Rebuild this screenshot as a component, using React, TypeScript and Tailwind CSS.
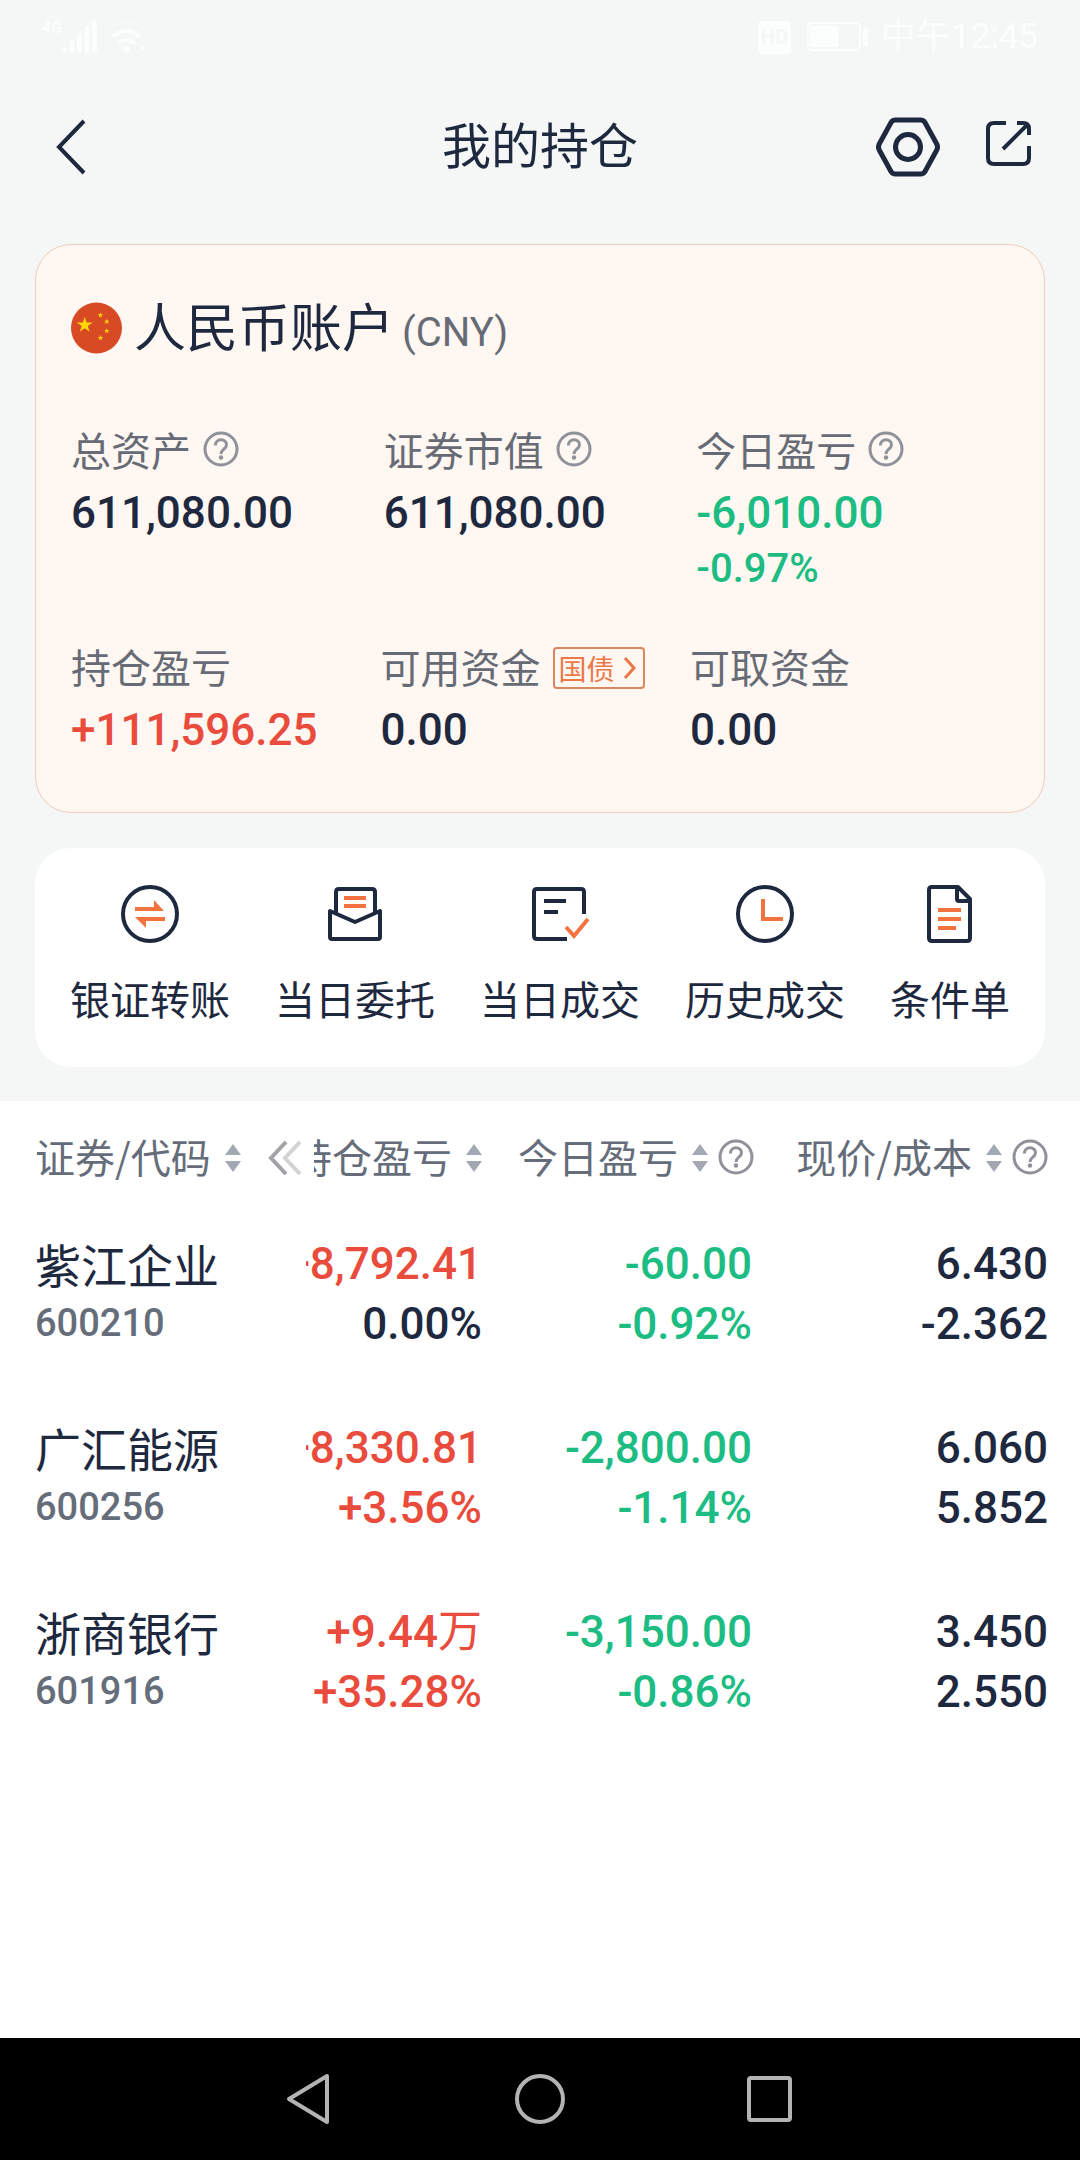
import { type ReactNode } from "react";
import clsx from "clsx";

type Tone = "up" | "down" | "flat";

type Cell = { text: string; unit?: string; tone: Tone };

type Holding = {
  name: string;
  code: string;
  total: [Cell, Cell];
  today: [Cell, Cell];
  price: string;
  cost: string;
};

const toneClass: Record<Tone, string> = {
  up: "text-[#e94b3c]",
  down: "text-[#1cbc83]",
  flat: "text-[#1e293f]",
};

const holdings: Holding[] = [
  {
    name: "紫江企业",
    code: "600210",
    total: [
      { text: "+8,792.41", tone: "up" },
      { text: "0.00%", tone: "flat" },
    ],
    today: [
      { text: "-60.00", tone: "down" },
      { text: "-0.92%", tone: "down" },
    ],
    price: "6.430",
    cost: "-2.362",
  },
  {
    name: "广汇能源",
    code: "600256",
    total: [
      { text: "+8,330.81", tone: "up" },
      { text: "+3.56%", tone: "up" },
    ],
    today: [
      { text: "-2,800.00", tone: "down" },
      { text: "-1.14%", tone: "down" },
    ],
    price: "6.060",
    cost: "5.852",
  },
  {
    name: "浙商银行",
    code: "601916",
    total: [
      { text: "+9.44", unit: "万", tone: "up" },
      { text: "+35.28%", tone: "up" },
    ],
    today: [
      { text: "-3,150.00", tone: "down" },
      { text: "-0.86%", tone: "down" },
    ],
    price: "3.450",
    cost: "2.550",
  },
];

function StatusBar() {
  return (
    <div className="flex h-[74px] items-center justify-between px-[42px] text-[#fcfdfd]">
      <div className="flex items-center gap-2.5">
        <div className="flex items-start">
          <span className="font-['Roboto',sans-serif] text-base leading-4 font-bold">4G</span>
          <svg width="36" height="34" viewBox="0 0 36 34" fill="currentColor" aria-hidden="true">
            <circle cx="2.5" cy="30.5" r="2.5" />
            <rect x="7.5" y="20" width="5" height="13" rx="2.5" />
            <rect x="15" y="13" width="5" height="20" rx="2.5" />
            <rect x="22.5" y="6" width="5" height="27" rx="2.5" />
            <rect x="30" y="0" width="5" height="33" rx="2.5" />
          </svg>
        </div>
        <svg width="40" height="34" viewBox="0 0 40 34" fill="none" stroke="currentColor" strokeLinecap="round" aria-hidden="true">
          <path d="M2 8.500a24 24 0 0 1 33 0" strokeWidth="2" opacity=".5" />
          <path d="M6.500 15.500a18 18 0 0 1 24 0" strokeWidth="4" />
          <path d="M11.500 22.500a11 11 0 0 1 14 0" strokeWidth="4" />
          <circle cx="18.500" cy="29" r="3.500" fill="currentColor" stroke="none" />
          <path d="M32 24l5 4-5 4z" fill="currentColor" stroke="none" />
        </svg>
      </div>
      <div className="flex items-center">
        <span className="flex size-[33px] items-center justify-center rounded bg-[#fcfdfd] font-['Roboto',sans-serif] text-xl font-bold text-[#f4f7f6]">
          HD
        </span>
        <svg className="ml-4" width="62" height="30" viewBox="0 0 62 30" aria-hidden="true">
          <rect x="1" y="1" width="52" height="27" rx="4" fill="none" stroke="currentColor" strokeWidth="2" />
          <rect x="3" y="4" width="28" height="21" fill="currentColor" />
          <rect x="56" y="6" width="5" height="18" rx="2" fill="currentColor" />
        </svg>
        <span className="ml-3 font-['Roboto','Noto_Sans_CJK_SC',sans-serif] text-[35px] leading-10">中午12:45</span>
      </div>
    </div>
  );
}

function Header() {
  return (
    <header className="grid h-[146px] grid-cols-[1fr_auto_1fr] items-center px-12">
      <button type="button" aria-label="返回" className="justify-self-start pl-2">
        <svg className="block" width="32" height="56" viewBox="0 0 32 56" fill="none" stroke="currentColor" strokeWidth="4">
          <path d="M28 2L3 28l25 26" />
        </svg>
      </button>
      <h1 className="pb-2 text-[49px] leading-[64px]">我的持仓</h1>
      <div className="flex items-center gap-[46px] justify-self-end">
        <button type="button" aria-label="设置">
          <svg className="block" width="64" height="60" viewBox="0 0 64 60" fill="none" stroke="currentColor" strokeWidth="5">
            <path d="M19.500 3h25q3 0 4.500 2.500L60.500 26.500q2 3.500 0 7L49 54.500q-1.500 2.500-4.500 2.500h-25q-3 0-4.500-2.500L3.500 33.500q-2-3.500 0-7L15 5.500Q16.500 3 19.500 3z" />
            <circle cx="32" cy="30" r="12.500" />
          </svg>
        </button>
        <button type="button" aria-label="分享" className="pb-2">
          <svg className="block" width="46" height="46" viewBox="0 0 46 46" fill="none" stroke="currentColor" strokeWidth="4">
            <path d="M20 3H8Q2 3 2 9v29q0 6 6 6h29q6 0 6-6V26" />
            <path d="M31 3h6q6 0 6 6v6M42 4L17 29" />
          </svg>
        </button>
      </div>
    </header>
  );
}

function HelpButton({ label }: { label: string }) {
  return (
    <button type="button" aria-label={`${label}说明`} className="shrink-0 text-[#8f929a]">
      <svg className="block" width="36" height="36" viewBox="0 0 36 36" fill="none" stroke="currentColor" strokeWidth="3">
        <circle cx="18" cy="18" r="16" />
        <path d="M12.500 14.500c0-3.500 2.300-5.700 5.500-5.700s5.500 2 5.500 5c0 4.500-5.500 4.300-5.500 9.200" />
        <circle cx="18" cy="26.500" r="2.200" fill="currentColor" stroke="none" />
      </svg>
    </button>
  );
}

function ChinaFlag() {
  const star = "M0-1L.225-.309.951-.309.363.118.588.809 0 .382-.588.809-.363.118-.951-.309-.225-.309z";
  return (
    <svg width="51" height="52" viewBox="0 0 52 52" aria-hidden="true">
      <circle cx="26" cy="26" r="26" fill="#d84a24" />
      <g fill="#ffd80a">
        <path d={star} transform="translate(14 23) scale(8.500)" />
        <path d={star} transform="translate(30 13) scale(3)" />
        <path d={star} transform="translate(36.500 19.500) scale(3)" />
        <path d={star} transform="translate(36.500 29) scale(3)" />
        <path d={star} transform="translate(30 36) scale(3)" />
      </g>
    </svg>
  );
}

type MetricProps = {
  label: string;
  value: string;
  tone?: Tone;
  sub?: string;
  extra?: ReactNode;
};

function Metric({ label, value, tone = "flat", sub, extra }: MetricProps) {
  return (
    <div className="whitespace-nowrap">
      <div className="flex h-[62px] items-center gap-3 text-[#666b76]">
        <span className="text-[40px] leading-[62px]">{label}</span>
        {extra}
      </div>
      <div className={clsx("font-['Roboto',sans-serif] text-[44px] leading-[66px] font-medium", toneClass[tone])}>{value}</div>
      {sub && (
        <div className={clsx("font-['Roboto',sans-serif] text-[40px] leading-[46px] font-medium", toneClass[tone])}>{sub}</div>
      )}
    </div>
  );
}

function AccountCard() {
  return (
    <section className="mx-[35px] mt-6 rounded-[36px] border border-[#f2cdbb] bg-[#fff7f1] px-[35px] pt-12 pb-[49px]">
      <div className="flex h-[68px] items-center">
        <div className="pt-0.5">
          <ChinaFlag />
        </div>
        <h2 className="ml-3 pb-1 text-[52px] leading-[64px]">人民币账户</h2>
        <span className="ml-2 pt-3 font-['Roboto',sans-serif] text-[40px] text-[#666b76]">(CNY)</span>
      </div>
      <div className="mt-[57px] grid grid-cols-3">
        <Metric label="总资产" value="611,080.00" extra={<HelpButton label="总资产" />} />
        <Metric label="证券市值" value="611,080.00" extra={<HelpButton label="证券市值" />} />
        <Metric label="今日盈亏" value="-6,010.00" tone="down" sub="-0.97%" extra={<HelpButton label="今日盈亏" />} />
      </div>
      <div className="mt-[43px] grid grid-cols-[33%_33%_34%]">
        <Metric label="持仓盈亏" value="+111,596.25" tone="up" />
        <Metric
          label="可用资金"
          value="0.00"
          extra={
            <div className="pt-1">
              <a
                href="#bonds"
                className="flex h-[42px] items-center gap-2 rounded-sm border-2 border-[#dc8660] pr-1.5 pl-1 text-[28px] leading-[38px] text-[#ec7747]"
              >
                国债
                <svg width="14" height="24" viewBox="0 0 14 24" fill="none" stroke="currentColor" strokeWidth="3" aria-hidden="true">
                  <path d="M2 2l9 10-9 10" />
                </svg>
              </a>
            </div>
          }
        />
        <Metric label="可取资金" value="0.00" />
      </div>
    </section>
  );
}

const actions: { label: string; icon: ReactNode }[] = [
  {
    label: "银证转账",
    icon: (
      <>
        <circle cx="30" cy="30" r="27" />
        <g fill="#f3733f" stroke="none">
          <path d="M15 23h19v-7l10 11H15z" />
          <path d="M45 37H26v7L15 33h30z" />
        </g>
      </>
    ),
  },
  {
    label: "当日委托",
    icon: (
      <>
        <path d="M11 29V8q0-3 3-3h33q3 0 3 3v21" />
        <path d="M5 27l25 11 25-11v26q0 2-2 2H7q-2 0-2-2z" strokeLinejoin="round" />
        <path d="M19 14h22M19 22h22" stroke="#f3733f" />
      </>
    ),
  },
  {
    label: "当日成交",
    icon: (
      <>
        <path d="M54 30V8q0-3-3-3H7Q4 5 4 8v44q0 3 3 3h30" />
        <path d="M14 17h22M14 28h14" />
        <path d="M36 43l8 9 14-17" stroke="#f3733f" />
      </>
    ),
  },
  {
    label: "历史成交",
    icon: (
      <>
        <circle cx="30" cy="30" r="27" />
        <path d="M28 15v20h20" stroke="#f3733f" />
      </>
    ),
  },
  {
    label: "条件单",
    icon: (
      <>
        <path d="M38 3H12q-3 0-3 3v48q0 3 3 3h35q3 0 3-3V15z" strokeLinejoin="round" />
        <path d="M37 4v11q0 2 2 2h11" />
        <path d="M18 26h23M18 35h23M18 44h18" stroke="#f3733f" />
      </>
    ),
  },
];

function QuickActions() {
  return (
    <nav className="mx-[35px] mt-[35px] flex justify-between rounded-[36px] bg-white px-[35px] pt-9 pb-[39px]">
      {actions.map(({ label, icon }) => (
        <button key={label} type="button" className="flex flex-col items-center">
          <svg width="60" height="60" viewBox="0 0 60 60" fill="none" stroke="currentColor" strokeWidth="4" aria-hidden="true">
            {icon}
          </svg>
          <span className="mt-6 text-[40px] leading-[60px]">{label}</span>
        </button>
      ))}
    </nav>
  );
}

function SortButton({ label }: { label: string }) {
  return (
    <button type="button" className="flex shrink-0 items-center gap-3.5">
      {label}
      <svg className="mt-1" width="16" height="28" viewBox="0 0 16 28" fill="#a3a9b3" aria-hidden="true">
        <path d="M8 0l8 11H0zM8 28l8-11H0z" />
      </svg>
    </button>
  );
}

function ValuePair({ cells }: { cells: [Cell, Cell] }) {
  return (
    <div className="flex flex-col items-end overflow-hidden">
      {cells.map((cell) => (
        <span key={cell.text} className={toneClass[cell.tone]}>
          {cell.text}
          {cell.unit && <span className="font-normal">{cell.unit}</span>}
        </span>
      ))}
    </div>
  );
}

function HoldingsTable() {
  return (
    <table className="w-full table-fixed text-left whitespace-nowrap">
      <thead>
        <tr className="h-[101px] text-[40px] leading-[60px] text-[#666d7a]">
          <th scope="col" className="w-[28%] pt-2 pl-[35px] font-normal">
            <div className="flex items-center justify-between">
              <SortButton label="证券/代码" />
              <svg className="mt-1" width="34" height="34" viewBox="0 0 34 34" fill="none" strokeWidth="4" aria-hidden="true">
                <path d="M18 1L3 17l15 16" stroke="#a2a3a6" />
                <path d="M32 1L17 17l15 16" stroke="#d2d3d5" />
              </svg>
            </div>
          </th>
          <th scope="col" className="w-[17%] pt-2 pr-1 pl-3 font-normal">
            <div className="flex justify-end overflow-hidden">
              <SortButton label="持仓盈亏" />
            </div>
          </th>
          <th scope="col" className="w-[25%] pt-2 pr-0.5 font-normal">
            <div className="flex items-center justify-end gap-2.5">
              <SortButton label="今日盈亏" />
              <div className="pt-1">
                <HelpButton label="今日盈亏" />
              </div>
            </div>
          </th>
          <th scope="col" className="w-[30%] pt-2 pr-8 font-normal">
            <div className="flex items-center justify-end gap-2.5">
              <SortButton label="现价/成本" />
              <div className="pt-1">
                <HelpButton label="现价/成本" />
              </div>
            </div>
          </th>
        </tr>
      </thead>
      <tbody className="font-['Roboto','Noto_Sans_CJK_SC',sans-serif] text-[44px] leading-[60px] font-medium">
        {holdings.map((item) => (
          <tr key={item.code} className="h-[184px]">
            <td className="pl-[35px]">
              <div className="font-['Noto_Sans_CJK_SC',sans-serif] text-[46px] leading-[58px] font-normal">{item.name}</div>
              <div className="text-[38px] leading-[62px] text-[#666d7a]">{item.code}</div>
            </td>
            <td className="pr-1 pl-1">
              <ValuePair cells={item.total} />
            </td>
            <td className="pr-1">
              <ValuePair cells={item.today} />
            </td>
            <td className="pr-8">
              <ValuePair
                cells={[
                  { text: item.price, tone: "flat" },
                  { text: item.cost, tone: "flat" },
                ]}
              />
            </td>
          </tr>
        ))}
      </tbody>
    </table>
  );
}

function SystemNav() {
  return (
    <nav className="grid h-[122px] grid-cols-3 place-items-center bg-black px-[18%] text-[#b4b2b3]">
      <button type="button" aria-label="后退">
        <svg className="block" width="52" height="52" viewBox="0 0 52 52" fill="none" stroke="currentColor" strokeWidth="4" strokeLinejoin="round">
          <path d="M43 3v46L5 26z" />
        </svg>
      </button>
      <button type="button" aria-label="主屏幕">
        <svg className="block" width="52" height="52" viewBox="0 0 52 52" fill="none" stroke="currentColor" strokeWidth="4">
          <circle cx="26" cy="26" r="23" />
        </svg>
      </button>
      <button type="button" aria-label="最近任务">
        <svg className="block" width="52" height="52" viewBox="0 0 52 52" fill="none" stroke="currentColor" strokeWidth="4">
          <rect x="5" y="5" width="41" height="42" rx="2" />
        </svg>
      </button>
    </nav>
  );
}

export default function App() {
  return (
    <div className="flex min-h-screen flex-col bg-[#f4f7f6] font-['Noto_Sans_CJK_SC',sans-serif] text-[#1e293f]">
      <StatusBar />
      <Header />
      <AccountCard />
      <QuickActions />
      <main className="mt-[34px] flex-1 bg-white">
        <HoldingsTable />
      </main>
      <SystemNav />
    </div>
  );
}
